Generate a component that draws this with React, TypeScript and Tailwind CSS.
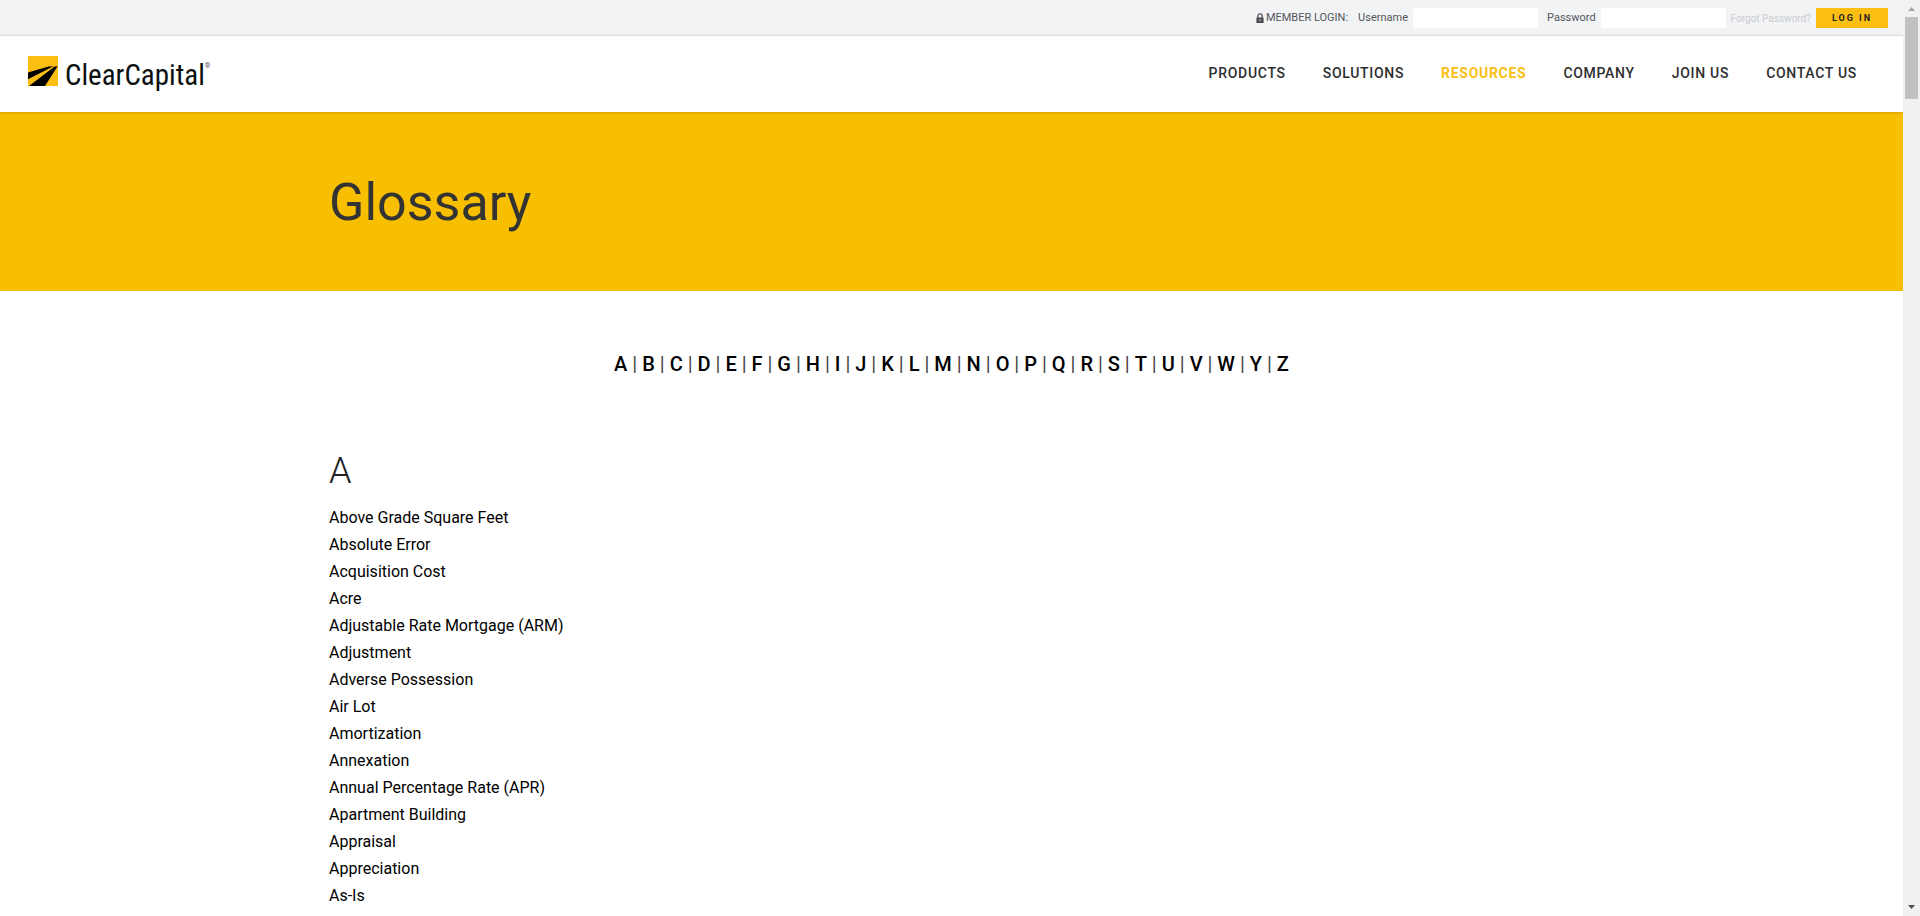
const navItems = ["PRODUCTS", "SOLUTIONS", "RESOURCES", "COMPANY", "JOIN US", "CONTACT US"];

const letters = "ABCDEFGHIJKLMNOPQRSTUVWYZ".split("");

const terms = [
  "Above Grade Square Feet",
  "Absolute Error",
  "Acquisition Cost",
  "Acre",
  "Adjustable Rate Mortgage (ARM)",
  "Adjustment",
  "Adverse Possession",
  "Air Lot",
  "Amortization",
  "Annexation",
  "Annual Percentage Rate (APR)",
  "Apartment Building",
  "Appraisal",
  "Appreciation",
  "As-Is",
];

function LockIcon() {
  return (
    <svg viewBox="0 0 8 10" className="h-[10px] w-[8px]" aria-hidden="true">
      <path d="M1.9 5V2.9a2.1 2.1 0 0 1 4.2 0V5" fill="none" stroke="#4b4d50" strokeWidth="1.3" />
      <rect x="0.4" y="4.4" width="7.2" height="5.6" rx="0.6" fill="#4b4d50" />
      <rect x="3.5" y="6.2" width="1" height="2" fill="#d5d6d8" />
    </svg>
  );
}

function Logo() {
  return (
    <a href="#" className="flex items-end gap-[7px] pb-1 text-[#0b0f10]">
      <svg viewBox="0 0 30 30" className="size-[30px]" aria-hidden="true">
        <rect width="30" height="30" fill="#fbbf14" />
        <path d="M0 16.6 20.500 10.400 25.500 10.200 0 23.300Z" fill="#000" />
        <path d="M1 30 26.600 10.500 29.600 10.200 17 30Z" fill="#000" />
      </svg>
      <span className="flex items-start">
        <span className="font-['Roboto_Condensed','Liberation_Sans_Narrow',sans-serif] text-[29px] leading-[22px]">
          ClearCapital
        </span>
        <span className="text-[7px] leading-[4px] text-[#555]">®</span>
      </span>
    </a>
  );
}

function LoginBar() {
  return (
    <form className="flex h-[35px] items-center justify-end bg-[#f1f3f5] pt-px pr-[15px] text-[11px] text-[#54565a]">
      <span className="flex items-center gap-[2px]">
        <LockIcon />
        MEMBER LOGIN:
      </span>
      <label htmlFor="username" className="ml-[10px]">Username</label>
      <input id="username" type="text" className="ml-[5px] h-5 w-[125px] bg-white px-1" />
      <label htmlFor="password" className="ml-[9px]">Password</label>
      <input id="password" type="password" className="ml-[5px] h-5 w-[125px] bg-white px-1" />
      <a href="#" className="ml-[5px] text-[10px] text-[#cacccf]">Forgot Password?</a>
      <button type="button" className="ml-[5px] h-5 w-[72px] bg-[#fbbf14] pt-px text-[9px] font-bold tracking-[2px] text-[#222]">
        LOG IN
      </button>
    </form>
  );
}

function ScrollTrack() {
  return (
    <div className="flex w-[17px] shrink-0 flex-col items-center bg-[#f1f1f1]" aria-hidden="true">
      <svg viewBox="0 0 17 17" className="size-[17px]">
        <path d="M5 11h7L8.500 7Z" fill="#a3a3a3" />
      </svg>
      <div className="h-[82px] w-[13px] bg-[#c1c1c1]" />
      <svg viewBox="0 0 17 17" className="mt-auto size-[17px]">
        <path d="M5 6h7L8.500 10Z" fill="#505050" />
      </svg>
    </div>
  );
}

export default function App() {
  return (
    <div className="flex h-screen bg-white font-[Roboto,sans-serif]">
      <div className="min-w-0 flex-1 overflow-hidden">
        <LoginBar />
        <header className="relative flex h-[77px] items-center justify-between border-t border-[#dcdee1] bg-white pr-[46px] pb-[2px] pl-7 shadow-[0_1px_3px_rgba(0,0,0,0.15)]">
          <Logo />
          <nav className="flex gap-[37px] text-[14px] font-medium tracking-wider text-[#2e2e2e]">
            {navItems.map((item) => (
              <a key={item} href="#" className={item === "RESOURCES" ? "font-bold text-[#fbbf14]" : ""}>
                {item}
              </a>
            ))}
          </nav>
        </header>
        <section className="bg-[#f8be00] pt-[61px] pb-[59px]">
          <div className="mx-auto max-w-[1245px]">
            <h1 className="text-[52px] leading-[59px] text-[#333]">Glossary</h1>
          </div>
        </section>
        <main className="mx-auto max-w-[1245px] pt-[58px]">
          <nav className="text-center text-[20px] leading-[30px] text-[#444]">
            {letters.map((letter, i) => (
              <span key={letter}>
                {i > 0 && " | "}
                <a href="#" className="font-medium text-black">{letter}</a>
              </span>
            ))}
          </nav>
          <h2 className="mt-[69px] text-[36px] leading-[46px] font-light text-[#222]">A</h2>
          <ul className="mt-[10px] text-[16px] leading-[27px] text-black">
            {terms.map((term) => (
              <li key={term}>
                <a href="#">{term}</a>
              </li>
            ))}
          </ul>
        </main>
      </div>
      <ScrollTrack />
    </div>
  );
}
